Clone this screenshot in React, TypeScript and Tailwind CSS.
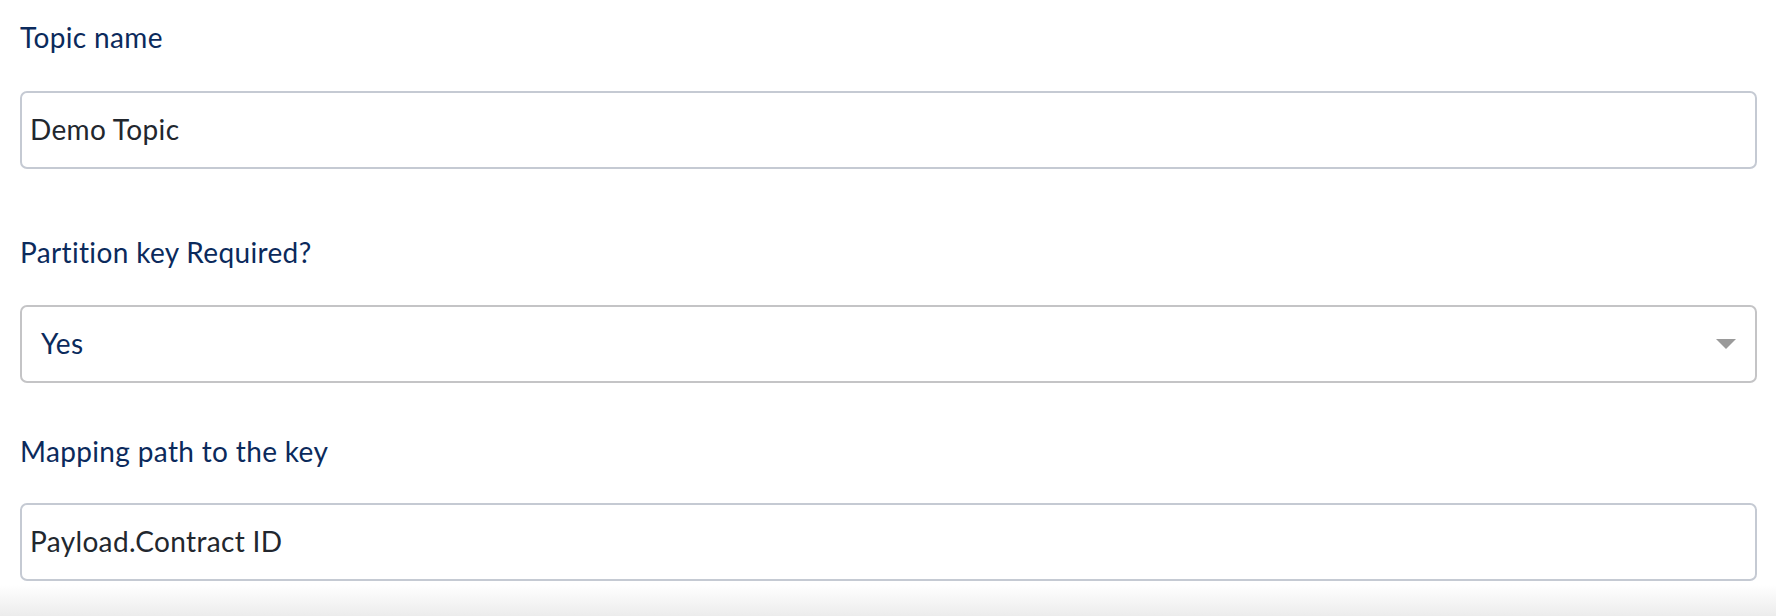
import React from "react";

export default function App() {
  const font = { fontFamily: "Lato, 'Noto Sans', sans-serif" };
  return (
    <div className="w-[1776px] h-[616px] bg-white overflow-hidden flex flex-col tracking-[0.35px]" style={font}>
      <div className="pl-[20px] pr-[19px] flex flex-col">
        <label className="mt-[19px] mb-[36px] text-[28px] leading-[36px] text-[#0b2a5c]">Topic name</label>
        <div className="h-[78px] border-2 border-[#c5cad3] rounded-[7px] flex items-center pl-[8px] pb-[3px] text-[28px] text-[#22272e]">
          Demo Topic
        </div>
        <label className="mt-[65px] mb-[35px] text-[28px] leading-[36px] text-[#0b2a5c]">Partition key Required?</label>
        <div className="h-[78px] border-2 border-[#c4c4c6] rounded-[7px] flex items-center justify-between pl-[19px] pr-[19px] pb-[3px] text-[28px] text-[#0b2a5c]">
          <span>Yes</span>
          <svg width="20" height="10" viewBox="0 0 20 10" className="mt-[2px]">
            <polygon points="0,0 20,0 10,10" fill="#9a9a9a" />
          </svg>
        </div>
        <label className="mt-[50px] mb-[34px] text-[28px] leading-[36px] text-[#0b2a5c]">Mapping path to the key</label>
        <div className="h-[78px] border-2 border-[#c5cad3] rounded-[7px] flex items-center pl-[8px] pb-[3px] text-[28px] text-[#22272e]">
          Payload.Contract ID
        </div>
      </div>
      <div className="flex-1 mt-[4px] bg-gradient-to-b from-white to-[#ececec]" />
    </div>
  );
}
